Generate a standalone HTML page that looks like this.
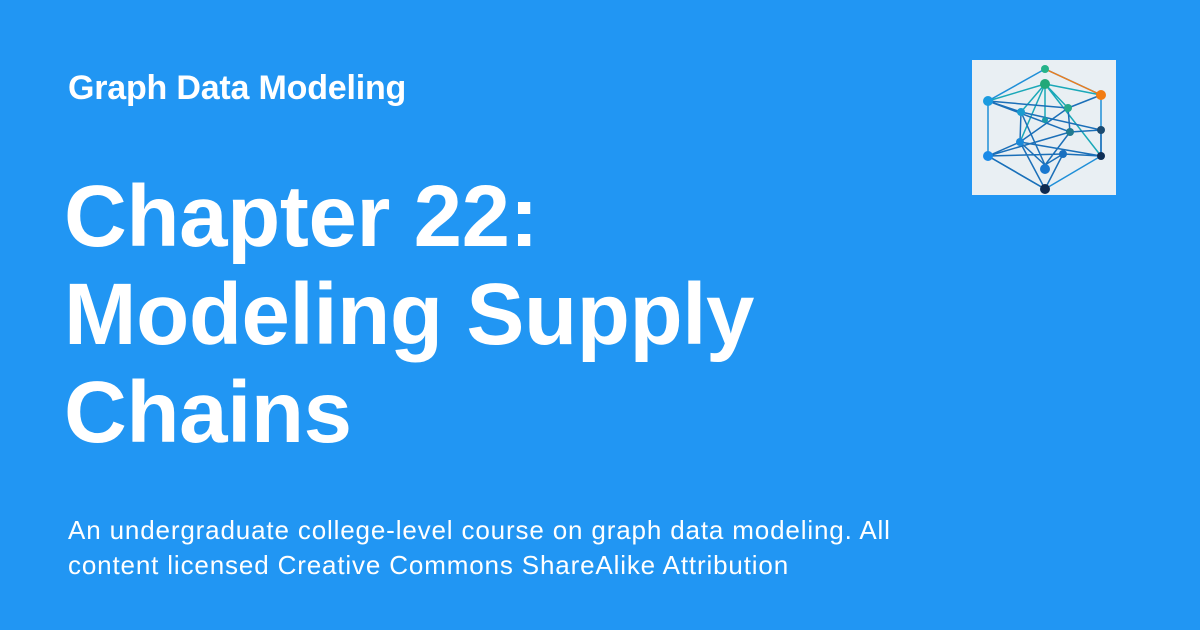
<!DOCTYPE html>
<html><head><style>
html,body{margin:0;padding:0}
body{width:1200px;height:630px;background:#2196f3;font-family:"Liberation Sans",Arial,sans-serif;color:#fff;position:relative;overflow:hidden}
.top{position:absolute;left:68px;top:69px;font-size:34px;font-weight:bold;letter-spacing:-0.2px}
h1{position:absolute;left:64px;top:168px;margin:0;font-size:87px;line-height:98px;font-weight:bold;letter-spacing:-0.4px}
.sub{position:absolute;left:68px;top:513px;font-size:26px;line-height:35px;width:900px;letter-spacing:0.85px;white-space:nowrap}
.logo{position:absolute;left:972px;top:60px;width:144px;height:135px;background:#e9eff3}
</style></head><body>
<div class="top">Graph Data Modeling</div>
<h1>Chapter 22:<br>Modeling Supply<br>Chains</h1>
<div class="sub">An undergraduate college-level course on graph data modeling. All<br>content licensed Creative Commons ShareAlike Attribution</div>
<div class="logo"><svg width="144" height="135" viewBox="970 58 144 135">
<g fill="none" stroke-width="1.5">
<path d="M1043 67L986 99L986 154L1043 187L1099 154L1099 93Z" stroke="#1f8fd8"/>
<path d="M1043 67L1099 93" stroke="#f07d1a"/>
<path d="M1043 82L986 99M1043 82L1099 93M1043 82L1019 110M1043 82L1066 106M1043 82L1043 118M1043 82L1018 140M1043 82L1099 154" stroke="#1aa8b8"/>
<path d="M986 99L1066 106M986 99L1019 110L1099 128M1019 110L1043 163M1066 106L1018 140L986 154M1066 106L1099 93L1066 106L1068 130L1043 163M1019 110L1018 140L1043 163L1061 152M986 154L1061 152L1099 154M986 154L1068 130L1099 128L1099 154M1018 140L1099 154M1043 187L1018 140M1043 187L1061 152M1043 187L986 154M986 99L1068 130" stroke="#1b6fb8"/>
</g>
<g>
<circle cx="1043" cy="67" r="4" fill="#25b38a"/><circle cx="1043" cy="82" r="5" fill="#22a878"/>
<circle cx="1099" cy="93" r="5" fill="#f27c12"/><circle cx="986" cy="99" r="5" fill="#1a9be0"/>
<circle cx="1019" cy="110" r="4" fill="#1a9bd0"/><circle cx="1066" cy="106" r="4" fill="#26a88c"/>
<circle cx="1043" cy="118" r="3" fill="#1a9aa8"/><circle cx="1068" cy="130" r="4" fill="#207a90"/>
<circle cx="1099" cy="128" r="4" fill="#1b4a70"/><circle cx="1018" cy="140" r="4" fill="#1a88d8"/>
<circle cx="986" cy="154" r="5" fill="#1a8ae8"/><circle cx="1061" cy="152" r="4" fill="#1a70c0"/>
<circle cx="1099" cy="154" r="4" fill="#0f2e55"/><circle cx="1043" cy="167" r="5" fill="#1a78d0"/>
<circle cx="1043" cy="187" r="5" fill="#0f2a50"/>
</g></svg></div>
</body></html>
